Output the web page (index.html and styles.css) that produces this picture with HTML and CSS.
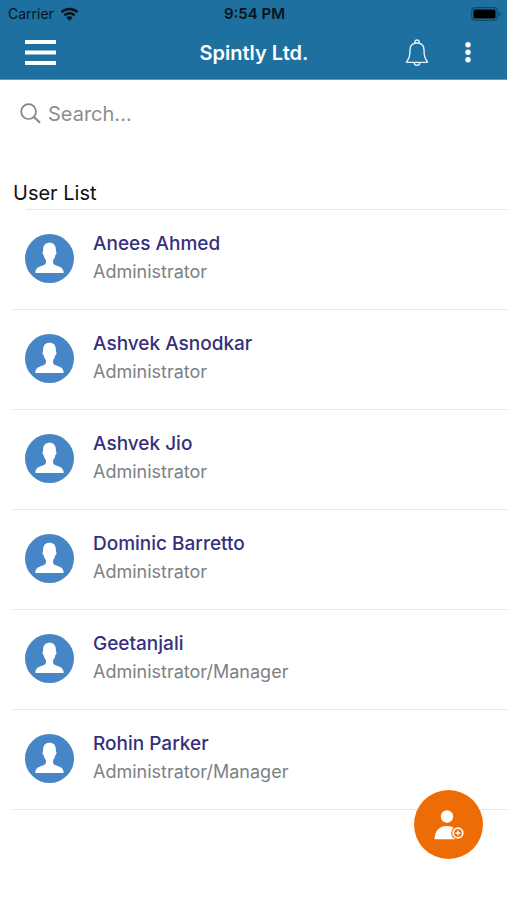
FILE: index.html
```html
<!DOCTYPE html>
<html lang="en">
<head>
<meta charset="utf-8">
<meta name="viewport" content="width=device-width, initial-scale=1">
<title>Spintly Ltd.</title>
<link rel="stylesheet" href="styles.css">
</head>
<body>
<svg class="defs" aria-hidden="true">
  <symbol id="person" viewBox="0 0 49 49">
    <circle cx="24.500" cy="24.500" r="24.500" fill="#4786c6"/>
    <path fill="#fff" d="M24.500 8.800c4 0 6.300 2.600 6.400 6.600v1.800c1.100.5.600 3.400-.6 4-.4 2-1.100 3.600-2.200 4.900v2.700c0 1.300 1.200 2 3.200 2.700 4.500 1.600 7.400 2.600 7.400 7.600H10.300c0-5 2.900-6 7.400-7.600 2-.7 3.200-1.400 3.200-2.700v-2.700c-1.100-1.300-1.800-2.900-2.200-4.900-1.200-.6-1.700-3.500-.6-4v-1.800c.1-4 2.400-6.600 6.400-6.600z"/>
  </symbol>
</svg>
<header class="top">
  <div class="status">
    <div class="carrier">
      <span>Carrier</span>
      <svg width="19" height="14" viewBox="0 0 18 14" aria-hidden="true">
        <g fill="none" stroke="#06131b" stroke-width="2.400">
          <path d="M1 5.200a11.500 11.500 0 0 1 16 0"/>
          <path d="M3.900 8.300a7.300 7.300 0 0 1 10.200 0"/>
        </g>
        <path fill="#06131b" d="M9 13.800 5.900 10.600a4.400 4.400 0 0 1 6.200 0z"/>
      </svg>
    </div>
    <div class="clock">9:54 PM</div>
    <div class="power">
      <svg width="30" height="14" viewBox="0 0 30 14" aria-hidden="true">
        <rect x=".7" y=".7" width="25.600" height="12.600" rx="3.500" fill="none" stroke="#124a6b" stroke-width="1.200"/>
        <rect x="2.500" y="2.500" width="22" height="9" rx="1.500" fill="#000"/>
        <path d="M27.600 4.800q2 .7 2 2.200t-2 2.200z" fill="#124a6b"/>
      </svg>
    </div>
  </div>
  <div class="bar">
    <div class="side">
      <button class="icon" type="button" aria-label="Menu">
        <svg width="31" height="26" viewBox="0 0 31 26"><path fill="#fff" d="M0 0h31v4H0zM0 10.500h31v4H0zM0 21h31v4H0z"/></svg>
      </button>
    </div>
    <h1 class="title">Spintly Ltd.</h1>
    <div class="side actions">
      <button class="icon" type="button" aria-label="Notifications">
        <svg width="24" height="28" viewBox="0 0 24 28" fill="none" stroke="#e4f2fa" stroke-width="1.400" stroke-linejoin="round">
          <path d="M9.900 4.200C6.800 5 5 7.600 5 11c0 6.300-.7 9-3.300 11.400-.5.500-.3 1 .4 1h19.800c.7 0 .9-.5.400-1C19.700 20 19 17.300 19 11c0-3.400-1.800-6-4.900-6.800"/>
          <path d="M9.900 4.200V3.100a2.100 2.100 0 0 1 4.200 0v1.100q-2.100-.5-4.200 0zM9.200 23.600a2.800 2.800 0 0 0 5.600 0"/>
        </svg>
      </button>
      <button class="icon" type="button" aria-label="More options">
        <svg width="6" height="22" viewBox="0 0 6 22" fill="#fff"><circle cx="3" cy="2.700" r="2.700"/><circle cx="3" cy="10.200" r="2.700"/><circle cx="3" cy="17.700" r="2.700"/></svg>
      </button>
    </div>
  </div>
</header>
<main>
  <label class="search">
    <svg width="22" height="22" viewBox="0 0 22 22" fill="none" stroke="#858585" aria-hidden="true"><circle cx="8.600" cy="8.600" r="7.400" stroke-width="1.700"/><path d="m14 14 6 5.700" stroke-width="2"/></svg>
    <input type="search" placeholder="Search..." aria-label="Search users">
  </label>
  <h2 class="heading">User List</h2>
  <ul class="users">
    <li class="user"><svg class="avatar" aria-hidden="true"><use href="#person"/></svg><div><h3 class="name">Anees Ahmed</h3><p class="role">Administrator</p></div></li>
    <li class="user"><svg class="avatar" aria-hidden="true"><use href="#person"/></svg><div><h3 class="name">Ashvek Asnodkar</h3><p class="role">Administrator</p></div></li>
    <li class="user"><svg class="avatar" aria-hidden="true"><use href="#person"/></svg><div><h3 class="name">Ashvek Jio</h3><p class="role">Administrator</p></div></li>
    <li class="user"><svg class="avatar" aria-hidden="true"><use href="#person"/></svg><div><h3 class="name">Dominic Barretto</h3><p class="role">Administrator</p></div></li>
    <li class="user"><svg class="avatar" aria-hidden="true"><use href="#person"/></svg><div><h3 class="name">Geetanjali</h3><p class="role">Administrator/Manager</p></div></li>
    <li class="user"><svg class="avatar" aria-hidden="true"><use href="#person"/></svg><div><h3 class="name">Rohin Parker</h3><p class="role">Administrator/Manager</p></div></li>
  </ul>
</main>
<button class="add" type="button" aria-label="Add user">
  <svg width="30" height="30" viewBox="0 0 30 30">
    <circle cx="13" cy="6.500" r="6.200" fill="#fff"/>
    <path fill="#fff" d="M.5 29.300C.8 20.500 5.500 16 13 16c3.600 0 6.400 1 8.500 2.900v10.400z"/>
    <circle cx="24" cy="23" r="6.800" fill="#ee6c05"/>
    <circle cx="24" cy="23" r="4.800" fill="none" stroke="#fff" stroke-width="1.700"/>
    <path d="M24 20.500v5M21.500 23h5" stroke="#fff" stroke-width="1.400"/>
  </svg>
</button>
</body>
</html>
```

FILE: styles.css
```css
* {
  box-sizing: border-box;
}

body {
  margin: 0;
  min-height: 100vh;
  background: #fff;
  font-family: Inter, "Liberation Sans", sans-serif;
}

h1, h2, h3, p, ul {
  margin: 0;
  padding: 0;
}

button {
  border: 0;
  padding: 0;
  cursor: pointer;
}

svg {
  display: block;
}

.defs {
  display: none;
}

.top {
  background: #1d70a0;
  border-bottom: 1px solid #5f9bbe;
}

.status {
  display: grid;
  grid-template-columns: 1fr auto 1fr;
  align-items: center;
  height: 27px;
  padding: 0 6px 0 8px;
  color: #06131b;
  font-size: 14px;
}

.carrier {
  display: flex;
  align-items: center;
  gap: 6px;
}

.clock {
  font-size: 15px;
  font-weight: 600;
}

.power {
  justify-self: end;
}

.bar {
  display: grid;
  grid-template-columns: 1fr auto 1fr;
  align-items: center;
  height: 52px;
  padding: 0 36px 0 25px;
}

.title {
  padding-left: 12px;
  color: #fff;
  font-size: 20px;
  font-weight: 600;
  line-height: 24px;
}

.side {
  display: flex;
  align-items: center;
}

.actions {
  justify-content: flex-end;
  gap: 36px;
}

.icon {
  background: none;
}

.search {
  display: flex;
  align-items: center;
  gap: 6px;
  height: 68px;
  padding: 0 20px;
}

.search input {
  flex: 1;
  min-width: 0;
  border: 0;
  padding: 0;
  outline: 0;
  background: none;
  color: #222;
  font: 20px/24px Inter, "Liberation Sans", sans-serif;
}

.search input::placeholder {
  color: #8e8e8e;
  opacity: 1;
}

.heading {
  margin-top: 31px;
  padding: 0 0 2px 13px;
  color: #111;
  font-size: 20px;
  font-weight: 400;
  line-height: 28px;
}

.users {
  padding-left: 13px;
  list-style: none;
}

.users::before {
  content: "";
  display: block;
  height: 1px;
  margin-left: 13px;
  background: #e6e6e6;
}

.user {
  display: flex;
  gap: 19px;
  height: 100px;
  padding: 20px 12px 0;
  border-bottom: 1px solid #e6e6e6;
}

.avatar {
  flex: none;
  width: 49px;
  height: 49px;
  margin-top: 4px;
}

.name {
  color: #35307c;
  font-size: 19px;
  font-weight: 500;
  line-height: 28px;
}

.role {
  color: #7b8283;
  font-size: 18px;
  line-height: 28px;
}

.add {
  position: fixed;
  right: 24px;
  bottom: 41px;
  display: grid;
  place-items: center;
  width: 69px;
  height: 69px;
  border-radius: 50%;
  background: #ee6c05;
}
```
